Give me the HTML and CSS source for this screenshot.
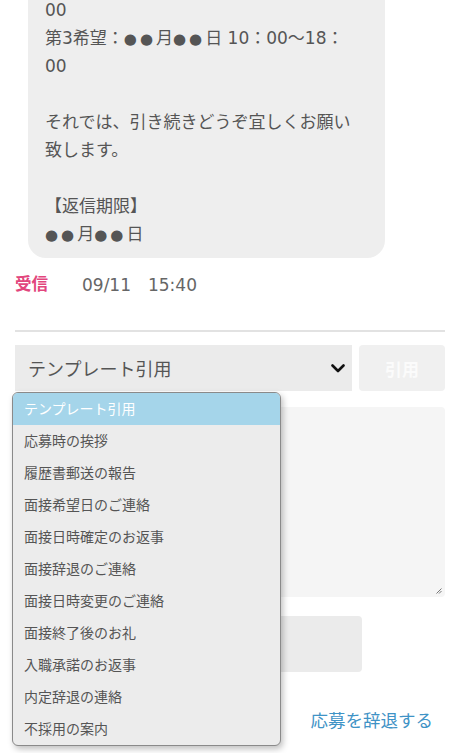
FILE: index.html
```html
<!DOCTYPE html>
<html lang="ja">
<head>
<meta charset="utf-8">
<link rel="stylesheet" href="styles.css">
</head>
<body>
<div class="page">
  <div class="bubble">00<br>第3希望：<span class="dots">●●</span>月<span class="dots">●●</span>日 10：00〜18：<br>00<br><br>それでは、引き続きどうぞ宜しくお願い致します。<br><br>【返信期限】<br><span class="dots">●●</span>月<span class="dots">●●</span>日</div>
  <div class="meta"><span class="recv">受信</span><span class="time">09/11　15:40</span></div>
  <div class="divider"></div>
  <div class="form">
    <div class="tpl-row">
      <div class="select">
        <span>テンプレート引用</span>
        <svg class="chev" width="14" height="9" viewBox="0 0 14 9"><path d="M1.5 1.5 L7 7 L12.5 1.5" fill="none" stroke="#111" stroke-width="2.6" stroke-linecap="round" stroke-linejoin="round"/></svg>
      </div>
      <div class="quote-btn">引用</div>
      <ul class="dropdown">
        <li class="active">テンプレート引用</li>
        <li>応募時の挨拶</li>
        <li>履歴書郵送の報告</li>
        <li>面接希望日のご連絡</li>
        <li>面接日時確定のお返事</li>
        <li>面接辞退のご連絡</li>
        <li>面接日時変更のご連絡</li>
        <li>面接終了後のお礼</li>
        <li>入職承諾のお返事</li>
        <li>内定辞退の連絡</li>
        <li>不採用の案内</li>
      </ul>
    </div>
    <div class="textarea">
      <svg class="grip" width="6" height="6" viewBox="0 0 6 6"><path d="M5.5 0.5 L0.5 5.5 M5.5 3 L3 5.5" stroke="#777" stroke-width="1"/></svg>
    </div>
    <div class="send-wrap"><div class="send"></div></div>
    <div class="withdraw"><a class="withdraw-link">応募を辞退する</a></div>
  </div>
</div>
</body>
</html>
```
FILE: styles.css
```css
html, body {
  margin: 0;
  padding: 0;
  background: #fff;
}
body {
  font-family: "DejaVu Sans", "Noto Sans CJK JP", sans-serif;
  color: #555;
  height: 753px;
  overflow: hidden;
}
.page {
  padding: 0 13px 0 15px;
}
.bubble {
  margin: -20px 0 0 13px;
  width: 320px;
  padding: 16px 20px 10px 17px;
  background: #eeeeee;
  border-radius: 18px;
  font-size: 17px;
  line-height: 28px;
  color: #555;
  word-break: break-all;
}
.dots {
  font-size: 15px;
  line-height: 1;
  letter-spacing: 3px;
}
.meta {
  display: flex;
  align-items: center;
  height: 28px;
  margin-top: 11px;
}
.recv {
  font-family: "Noto Sans CJK JP", sans-serif;
  font-size: 16.5px;
  font-weight: bold;
  color: #e2467d;
  width: 67px;
}
.time {
  font-size: 17px;
  color: #666;
}
.divider {
  height: 2px;
  background: #e2e2e2;
  margin-top: 33px;
}
.form {
  margin-top: 13px;
}
.tpl-row {
  position: relative;
  display: flex;
  gap: 7px;
  height: 46px;
}
.select {
  flex: 0 0 337px;
  background: #ebebeb;
  display: flex;
  align-items: center;
  justify-content: space-between;
  padding: 0 7px 0 13px;
  box-sizing: border-box;
  font-size: 18px;
  color: #555;
}
.quote-btn {
  flex: 1;
  background: #f0f0f0;
  border-radius: 4px;
  color: #fbfbfb;
  font-size: 17px;
  font-weight: bold;
  display: flex;
  align-items: center;
  justify-content: center;
}
.dropdown {
  position: absolute;
  left: -3px;
  top: 47px;
  width: 267px;
  margin: 0;
  padding: 0;
  list-style: none;
  background: #ececec;
  border: 1px solid #8a8a8a;
  border-radius: 6px;
  box-shadow: 2px 3px 6px rgba(0,0,0,0.25);
  overflow: hidden;
  z-index: 5;
}
.dropdown li {
  height: 32px;
  line-height: 32px;
  padding-left: 11px;
  font-size: 14px;
  color: #555;
}
.dropdown li.active {
  background: #a5d5ea;
  color: #fff;
}
.textarea {
  position: relative;
  margin-top: 16px;
  height: 190px;
  background: #f5f5f5;
  border-radius: 4px;
}
.grip {
  position: absolute;
  right: 3px;
  bottom: 3px;
}
.send-wrap {
  margin-top: 19px;
  display: flex;
  justify-content: center;
  padding-right: 83px;
}
.send {
  width: 264px;
  height: 56px;
  background: #ebebeb;
  border-radius: 4px;
  margin-left: 83px;
}
.withdraw {
  display: flex;
  justify-content: flex-end;
  padding-right: 12px;
  margin-top: 36px;
}
.withdraw-link {
  font-family: "Noto Sans CJK JP", sans-serif;
  font-size: 17.5px;
  color: #3f93c6;
  line-height: 24px;
}
```
